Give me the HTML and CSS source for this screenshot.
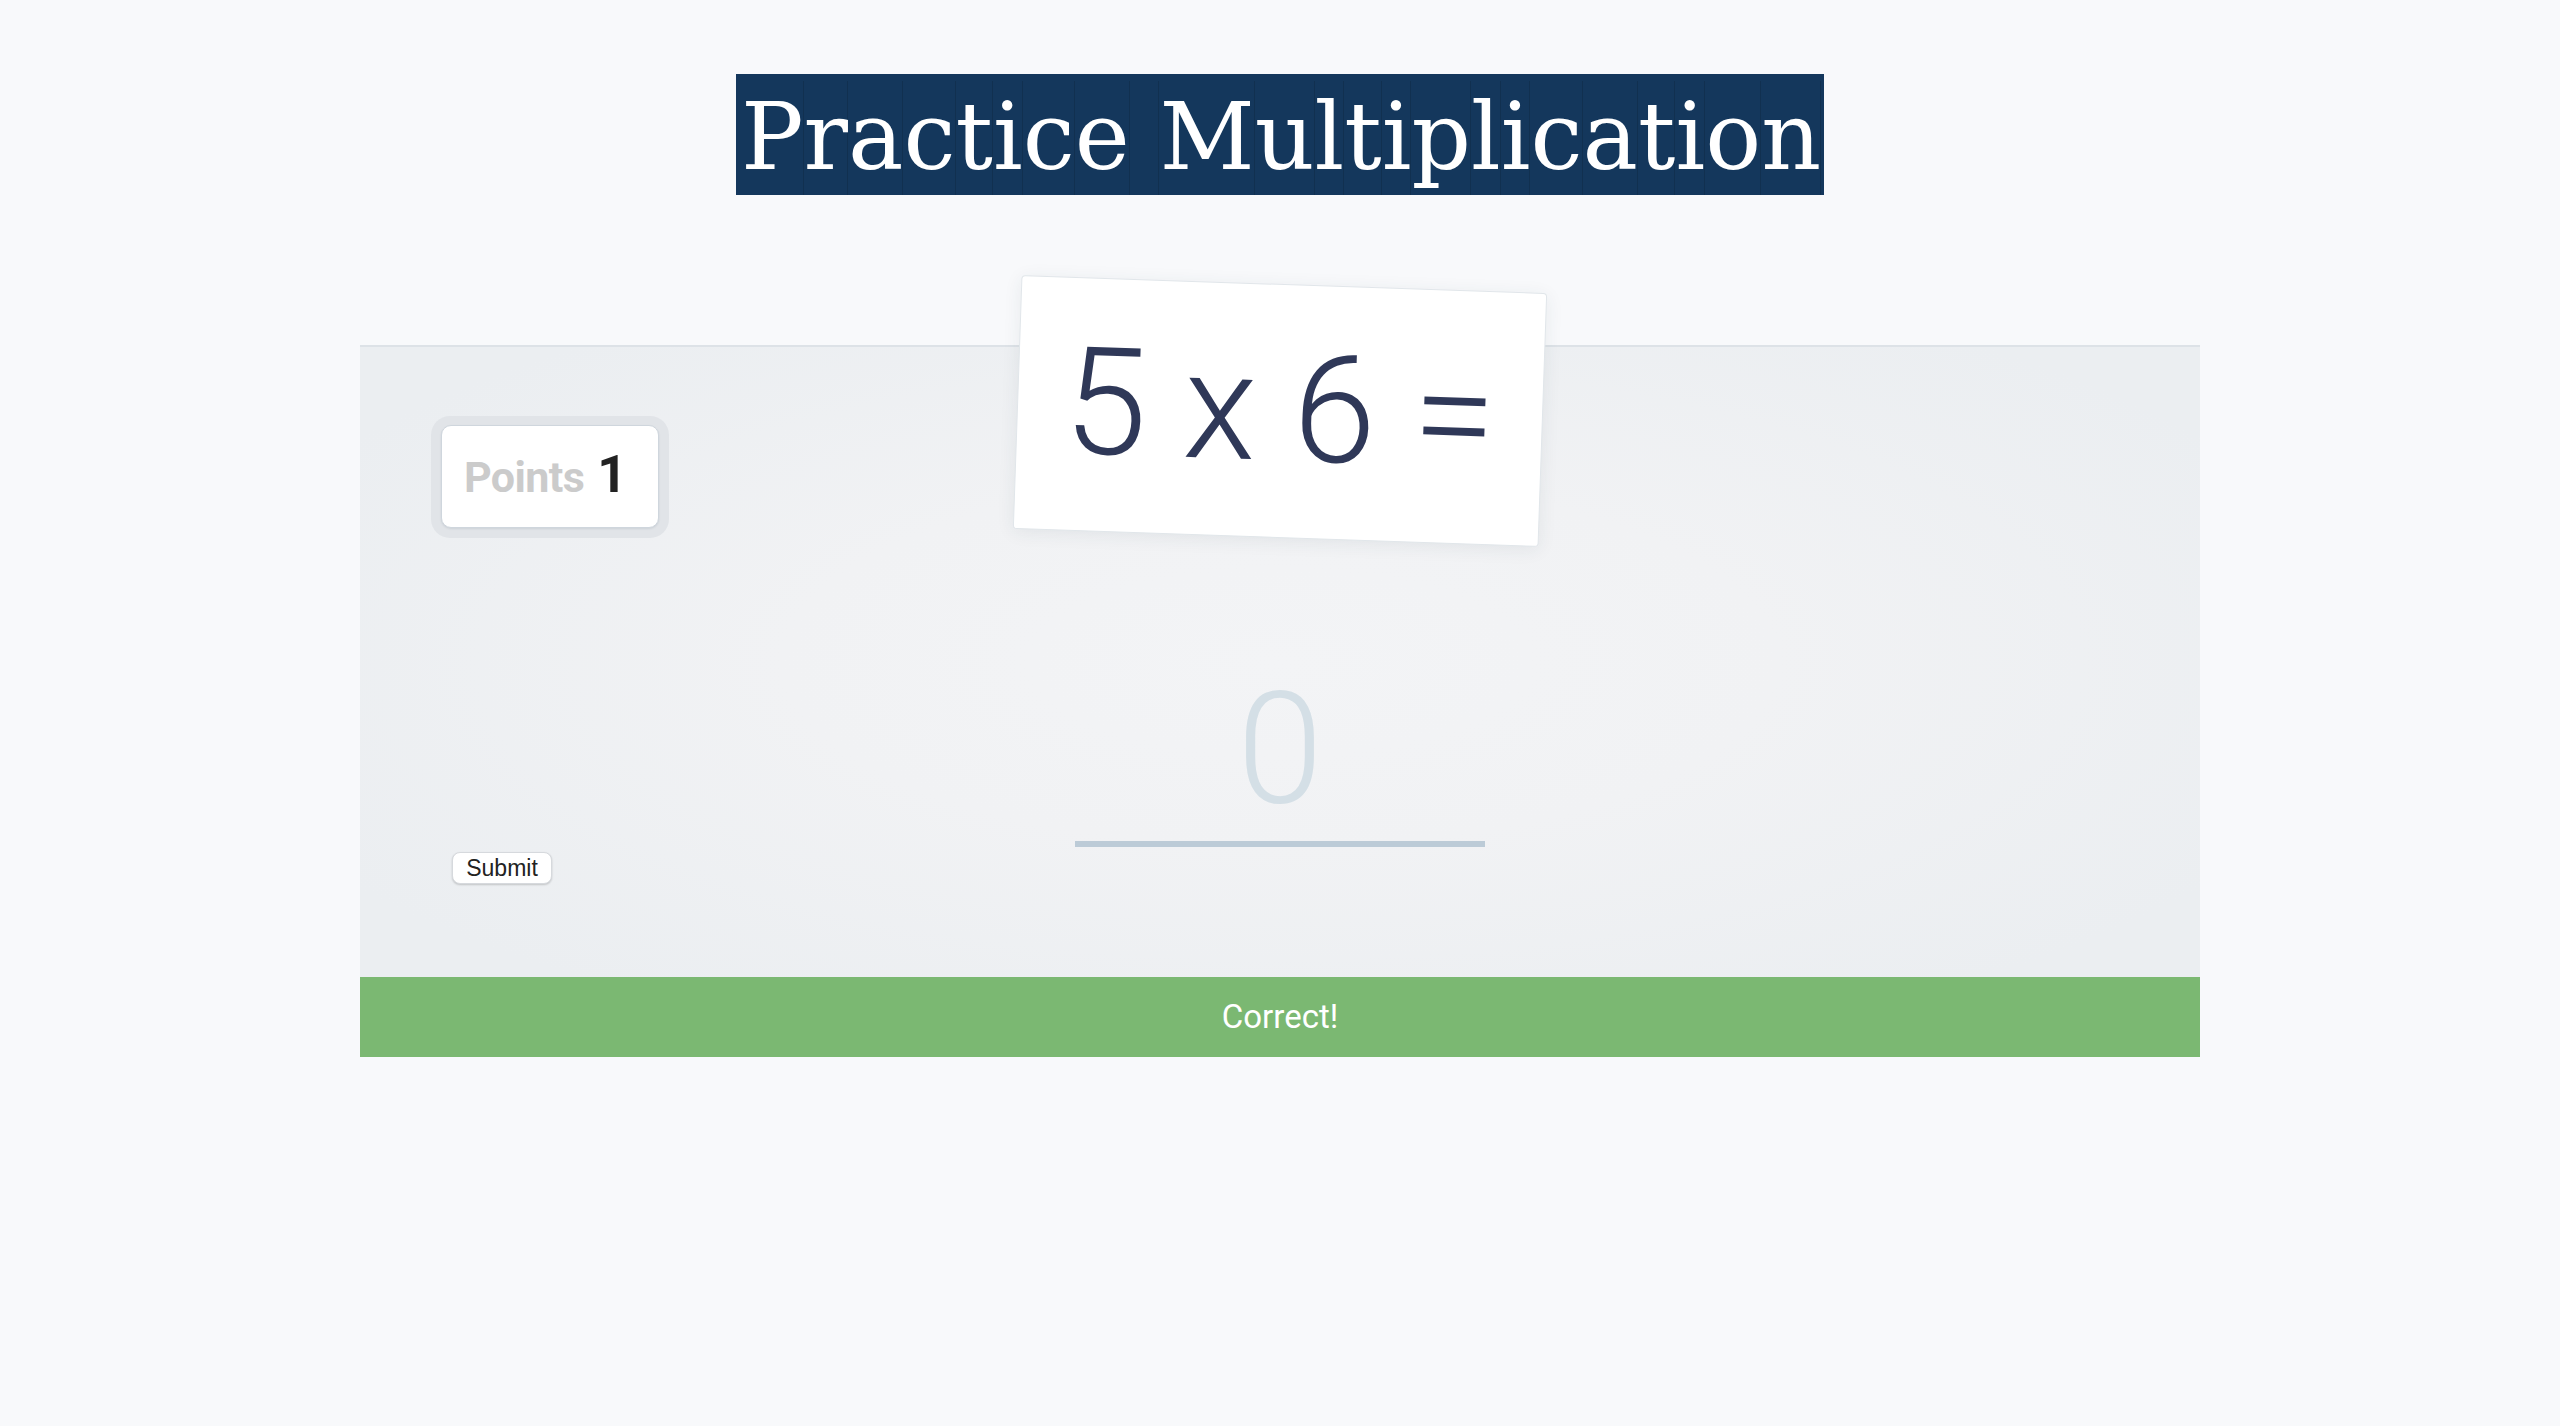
FILE: index.html
```html
<!DOCTYPE html>
<html lang="en">
<head>
<meta charset="utf-8">
<title>Practice Multiplication</title>
<link rel="stylesheet" href="styles.css">
</head>
<body>
<header class="header">
  <h1 class="title"><span>P</span><span>r</span><span>a</span><span>c</span><span>t</span><span>i</span><span>c</span><span>e</span><span>&nbsp;</span><span>M</span><span>u</span><span>l</span><span>t</span><span>i</span><span>p</span><span>l</span><span>i</span><span>c</span><span>a</span><span>t</span><span>i</span><span>o</span><span>n</span></h1>
</header>
<main class="game">
  <section class="panel">
    <div class="card">5 x 6 =</div>
    <div class="points-halo">
      <div class="points"><span class="points-label">Points</span><span class="points-value">1</span></div>
    </div>
    <div class="answer"><span class="answer-placeholder">0</span></div>
    <button class="submit" type="button">Submit</button>
  </section>
  <div class="result">Correct!</div>
</main>
</body>
</html>
```

FILE: styles.css
```css
html, body {
  margin: 0;
  padding: 0;
}

body {
  background: #f8f9fb;
  font-family: Roboto, "Liberation Sans", sans-serif;
}

.header {
  display: flex;
  justify-content: center;
  padding-top: 74px;
}

.title {
  margin: 0;
  display: inline-flex;
  background: #14375c;
  padding: 7px 3px 0 5px;
  font-family: "DejaVu Serif", serif;
  font-weight: normal;
  font-size: 93px;
  line-height: 113px;
  height: 121px;
  box-sizing: border-box;
  color: #ffffff;
}

.title span {
  display: inline-block;
  box-shadow: inset -1px 0 0 rgba(0, 0, 0, 0.12);
  white-space: pre;
}

.game {
  width: 1840px;
  margin: 150px auto 0;
}

.panel {
  position: relative;
  height: 632px;
  box-sizing: border-box;
  border-top: 2px solid #dde2e7;
  background: radial-gradient(ellipse 60% 65% at 50% 50%, #f3f4f6 0%, #f1f2f4 45%, #ebeef1 100%);
  display: flex;
  flex-direction: column;
  align-items: flex-start;
}

.card {
  position: absolute;
  left: 50%;
  top: -63px;
  width: 526px;
  height: 254px;
  margin-left: -263px;
  box-sizing: border-box;
  background: #ffffff;
  border: 1px solid #e1e6ea;
  border-radius: 4px;
  box-shadow: 0 3px 18px rgba(40, 60, 80, 0.08);
  transform: rotate(1.96deg);
  display: flex;
  align-items: center;
  justify-content: center;
  font-family: Roboto, sans-serif;
  font-weight: 300;
  font-size: 150px;
  color: #2f3858;
  z-index: 2;
  padding-bottom: 4px;
}

.points-halo {
  margin: 69px 0 0 71px;
  padding: 9px 10px 10px;
  background: #e1e4e8;
  border-radius: 19px;
}

.points {
  width: 218px;
  height: 103px;
  box-sizing: border-box;
  background: #ffffff;
  border: 1px solid #cfd6dd;
  border-radius: 10px;
  box-shadow: 0 1px 2px rgba(60, 80, 100, 0.12);
  padding: 18px 0 0 22px;
  display: flex;
  align-items: baseline;
  font-family: Roboto, sans-serif;
  font-weight: 700;
  line-height: 61px;
}

.points-label {
  font-size: 43px;
  letter-spacing: -0.6px;
  color: #cbcbcb;
}

.points-value {
  font-size: 52px;
  color: #222222;
  margin-left: 13px;
}

.answer {
  align-self: center;
  margin-top: 134px;
  width: 410px;
  text-align: center;
  font-family: Roboto, sans-serif;
  font-weight: 300;
  font-size: 155px;
  line-height: 155px;
  padding-bottom: 14px;
  border-bottom: 6px solid #bccbd7;
  color: #d4dfe6;
}

.submit {
  margin: 5px 0 0 92px;
  width: 100px;
  height: 32px;
  padding: 0;
  background: #ffffff;
  border: 1px solid #d6d9dd;
  border-radius: 8px;
  box-shadow: 0 1px 2px rgba(0, 0, 0, 0.18);
  font-family: "Liberation Sans", Arial, sans-serif;
  font-size: 23px;
  color: #222222;
}

.result {
  height: 80px;
  background: #7bb872;
  color: #ffffff;
  text-align: center;
  font-family: Roboto, sans-serif;
  font-size: 33px;
  line-height: 80px;
}
```
